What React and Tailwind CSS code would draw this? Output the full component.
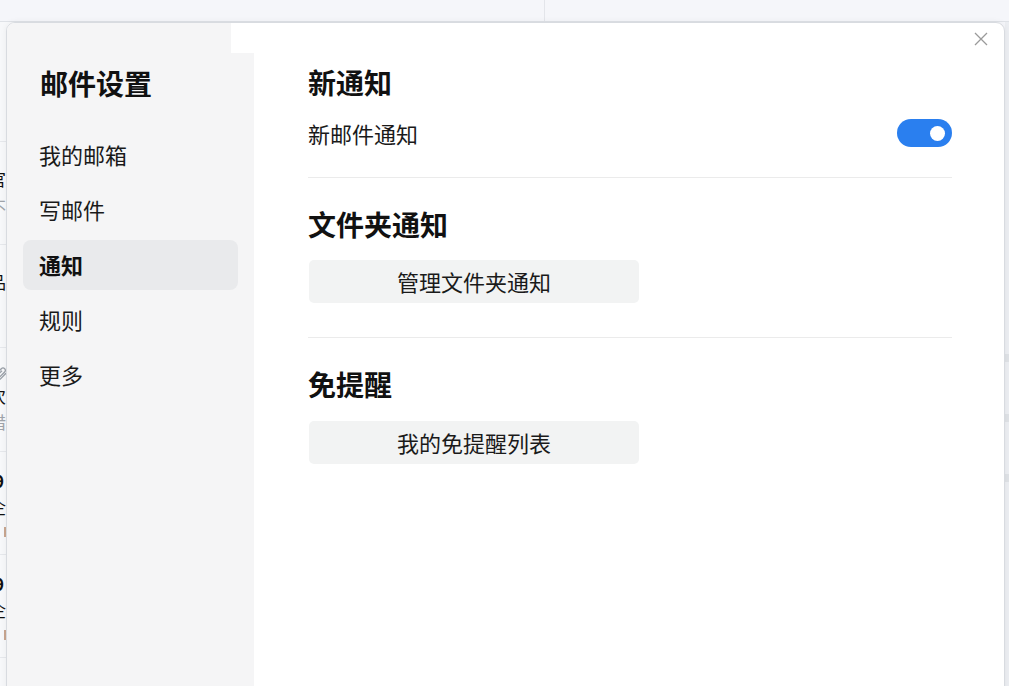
import React from "react";

const font = { fontFamily: '"Noto Sans CJK SC", "Noto Sans", sans-serif' };

function BgItem({ a, c }) {
  return (
    <div className="h-[103px] border-b border-[#e6e8ec] flex flex-col justify-center gap-[4px] overflow-hidden">
      <div className="ml-[-11px] text-[17px] leading-[24px] text-[#111] whitespace-nowrap">{a}</div>
      <div className="ml-[-11px] text-[17px] leading-[24px] text-[#a0a4aa] whitespace-nowrap">{c}</div>
    </div>
  );
}

export default function App() {
  const nav = ["我的邮箱", "写邮件", "通知", "规则", "更多"];
  return (
    <div className="relative w-[1009px] h-[686px] overflow-hidden bg-[#f5f6fa]" style={font}>
      {/* background page */}
      <div className="flex flex-col h-full">
        <div className="h-[22px] flex border-b border-[#dfe2e7]">
          <div className="w-[545px] border-r border-[#e3e5ea]"></div>
          <div className="flex-1"></div>
        </div>
        <div className="flex flex-1">
          <div className="w-[545px] bg-[#f7f8fa] flex flex-col">
            <div className="h-[120px] border-b border-[#e6e8ec]"></div>
            <BgItem a="官" c="不" />
            <BgItem a="品" c="!" />
            <div className="h-[104px] border-b border-[#e6e8ec] flex flex-col justify-center gap-[2px] overflow-hidden">
              <svg width="16" height="16" viewBox="0 0 24 24" className="ml-[-8px]" fill="none" stroke="#9aa0a8" strokeWidth="2">
                <path d="M21 11l-8.5 8.5a5 5 0 0 1-7-7L14 4a3.5 3.5 0 0 1 5 5l-8.5 8.5a2 2 0 0 1-3-3L15 7" />
              </svg>
              <div className="ml-[-11px] text-[17px] leading-[24px] text-[#111]">次</div>
              <div className="ml-[-11px] text-[17px] leading-[24px] text-[#a0a4aa]">惜</div>
            </div>
            {[0, 1].map((i) => (
              <div key={i} className="h-[103px] border-b border-[#e6e8ec] flex flex-col justify-center gap-[2px] overflow-hidden">
                <div className="ml-[-6px] text-[17px] leading-[24px] font-bold text-[#111]">9</div>
                <div className="ml-[-11px] text-[17px] leading-[24px] text-[#111]">企</div>
                <div className="ml-[4px] w-[2px] h-[10px] mt-[6px] bg-[#c9a690]"></div>
              </div>
            ))}
          </div>
          <div className="flex-1 bg-[#f5f6fa] flex justify-end">
            <div className="w-[4px] bg-[#eceef2] flex flex-col">
              <div className="h-[332px]"></div>
              <div className="h-[8px] bg-[#dfe2e6]"></div>
              <div className="h-[52px]"></div>
              <div className="h-[8px] bg-[#dfe2e6]"></div>
              <div className="h-[52px]"></div>
              <div className="h-[8px] bg-[#dfe2e6]"></div>
            </div>
          </div>
        </div>
      </div>

      {/* modal */}
      <div className="absolute left-[6px] top-[22px] w-[999px] h-[690px] bg-white rounded-t-[9px] border border-[#d8dbe0] shadow-[0_0_6px_rgba(0,0,0,0.06)] overflow-hidden flex">
        {/* sidebar */}
        <div className="flex flex-col h-full">
          <div className="h-[30px] w-[224px] bg-[#f5f5f6] shrink-0"></div>
          <div className="flex-1 w-[247px] bg-[#f5f5f6] px-[16px] pt-[12px]">
            <div className="pl-[17px] text-[28px] leading-[36px] font-bold text-[#111]">邮件设置</div>
            <div className="mt-[29px] flex flex-col gap-[5px]">
              {nav.map((n) => (
                <div
                  key={n}
                  className={
                    n === "通知"
                      ? "h-[50px] rounded-[8px] bg-[#e9eaec] px-[16px] flex items-center text-[22px] leading-[30px] pb-[3px] font-bold text-[#111]"
                      : "h-[50px] rounded-[8px] px-[16px] flex items-center text-[22px] leading-[30px] pb-[3px] text-[#1a1a1a]"
                  }
                >
                  {n}
                </div>
              ))}
            </div>
          </div>
        </div>

        {/* content */}
        <div className="relative flex-1 pl-[54px] pr-[52px] pt-[41px]">
          <button className="absolute right-[15px] top-[8px] w-[16px] h-[16px] flex items-center justify-center">
            <svg width="14" height="14" viewBox="0 0 14 14" fill="none" stroke="#9a9a9a" strokeWidth="1.3">
              <path d="M1 1L13 13M13 1L1 13" />
            </svg>
          </button>

          <div className="text-[28px] leading-[36px] font-bold text-[#111]">新通知</div>
          <div className="mt-[17px] h-[32px] flex items-center justify-between">
            <div className="text-[22px] leading-[32px] text-[#1a1a1a]">新邮件通知</div>
            <div className="w-[55px] h-[28px] rounded-full bg-[#2a7fef] flex items-center justify-end pr-[7px]">
              <div className="w-[15px] h-[15px] rounded-full bg-white"></div>
            </div>
          </div>
          <div className="mt-[28px] h-[1px] bg-[#ebebeb]"></div>

          <div className="mt-[28px] text-[28px] leading-[36px] font-bold text-[#111]">文件夹通知</div>
          <div className="mt-[18px] ml-[1px] w-[330px] h-[43px] rounded-[5px] bg-[#f2f3f3] flex items-center justify-center text-[22px] text-[#1a1a1a]">
            管理文件夹通知
          </div>
          <div className="mt-[34px] h-[1px] bg-[#ebebeb]"></div>

          <div className="mt-[28px] text-[28px] leading-[36px] font-bold text-[#111]">免提醒</div>
          <div className="mt-[19px] ml-[1px] w-[330px] h-[43px] rounded-[5px] bg-[#f2f3f3] flex items-center justify-center text-[22px] text-[#1a1a1a]">
            我的免提醒列表
          </div>
        </div>
      </div>
    </div>
  );
}
